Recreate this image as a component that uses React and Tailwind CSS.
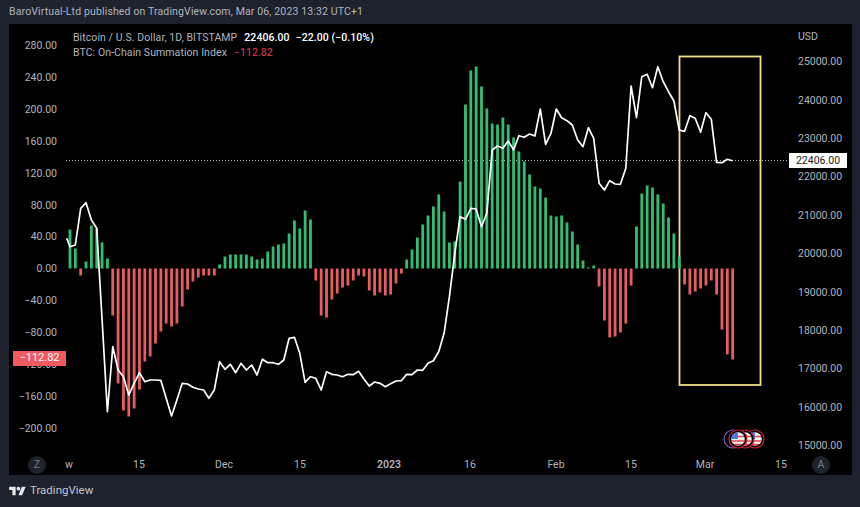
import React from 'react';

const BAR_STEP = 5.344;
const BASELINE = 268.5;

const dayX = (n) => 70 + n * BAR_STEP;

// Summation index per day, px above (+) or below (-) the zero line
const BARS = [
  39, 20, -7, 7, 43, 40, 26, 10, -47, -115, -142, -148, -140, -121, -93, -88, -75, -63, -55, -58, -55, -38, -21, -13,
  -9, -7, -7, -7, 4, 12, 14, 14, 14, 14, 12, 9, 10, 17, 22, 24, 25, 35, 48, 40, 58, 49, -12, -47, -49, -31, -25, -19,
  -17, -12, -7, -8, -22, -27, -24, -27, -26, -15, -5, 9, 19, 31, 44, 53, 62, 74, 57, 26, 27, 87, 164, 198, 202, 182,
  160, 145, 144, 151, 144, 131, 117, 107, 94, 82, 80, 71, 53, 52, 53, 46, 37, 24, 8, 1, 3, -18, -52, -69, -68, -64,
  -55, -17, 42, 75, 83, 81, 74, 65, 51, 35, 12, -16, -26, -23, -20, -17, -12, -26, -61, -86, -91,
];

// BTC close per day, page y
const PRICE = [
  246.7, 245, 208.3, 202.7, 220, 228.3, 320, 411.7, 346.7, 370, 376.7, 395, 383.3, 372.7, 381.7, 380, 380, 380.3,
  398.3, 416, 400, 383.3, 384, 387.3, 389, 390, 398.3, 390, 361.7, 369.3, 364.3, 372.7, 363.3, 370, 365, 375, 359.3,
  362.7, 362.7, 364.3, 360, 338.3, 337.3, 353.3, 382.3, 376.7, 378.3, 390, 371.7, 374.3, 375, 376.7, 374.3, 374.7,
  371.3, 379, 386, 382, 383.3, 386.7, 383.7, 381, 380.7, 374.3, 374.7, 370, 370.3, 363.3, 360.7, 351.7, 333.3, 296.7,
  253.3, 216.7, 219.3, 208.3, 209, 226.7, 213.3, 150, 146, 148.3, 141, 150, 135.7, 137.3, 134, 136, 109, 144.3, 133.3,
  109, 117.7, 120.7, 125, 140, 146.7, 127.7, 138.3, 183.3, 190, 180.7, 184, 184.3, 168.3, 86, 117.7, 76.7, 74.3, 87.7,
  66.7, 81.7, 91.7, 101, 130, 131.3, 115.7, 118.3, 132.3, 112.7, 119.3, 162.3, 162.7, 159.3, 160.7,
];

const LEFT_AXIS = [
  '280.00', '240.00', '200.00', '160.00', '120.00', '80.00', '40.00', '0.00',
  '−40.00', '−80.00', '−120.00', '−160.00', '−200.00',
];
const RIGHT_AXIS = [
  '25000.00', '24000.00', '23000.00', '22000.00', '21000.00', '20000.00',
  '19000.00', '18000.00', '17000.00', '16000.00', '15000.00',
];

const linePoints = ['66.7,238.3', ...PRICE.map((y, i) => `${dayX(i).toFixed(1)},${y}`)].join(' ');

const UsFlag = ({ cx, ring }) => (
  <g>
    <circle cx={cx} cy={439} r={9} fill="#000" stroke={ring} strokeWidth="1.2" />
    <circle cx={cx} cy={439} r={6.8} fill="#f4f4f4" />
    <path d={`M${cx - 6} 436.5h12M${cx - 6.4} 441h12.8M${cx - 4} 444.5h8`} stroke="#e0434b" strokeWidth="1.6" />
    <path d={`M${cx} 432.2a6.8 6.8 0 0 0-6.8 6.8h6.8z`} fill="#4f78d8" />
  </g>
);

const Chart = () => (
  <svg className="block w-[730px] h-[431px] shrink-0" viewBox="60 24 730 431">
    <line x1="66" y1="160.5" x2="790" y2="160.5" stroke="#b2b5be" strokeWidth="1" strokeDasharray="1 2" />
    <rect x="679.5" y="56.5" width="81" height="328.5" fill="none" stroke="#efe08a" strokeWidth="1.8" />
    {BARS.map((h, i) => (
      <rect
        key={i}
        x={dayX(i) - 1.4}
        y={h > 0 ? BASELINE - h : BASELINE}
        width="2.8"
        height={Math.abs(h)}
        fill={h > 0 ? '#2fbf71' : '#e85d62'}
      />
    ))}
    <polyline points={linePoints} fill="none" stroke="#fff" strokeWidth="1.7" strokeLinejoin="round" />
    <UsFlag cx={755} ring="#c2263a" />
    <UsFlag cx={745} ring="#c2263a" />
    <circle cx={733} cy={439} r={9} fill="none" stroke="#7a5cc8" strokeWidth="1.2" />
    <UsFlag cx={738} ring="#d0233a" />
  </svg>
);

const App = () => {
  return (
    <div className="w-[860px] h-[507px] bg-[#1e222d] text-[#b2b5be] font-['Roboto',sans-serif] text-[10.5px] overflow-hidden">
      {/* Published by */}
      <div className="h-[24px] pl-[9px] flex items-center text-[10.5px] tracking-[0.14px]">
        BaroVirtual-Ltd published on TradingView.com, Mar 06, 2023 13:32 UTC+1
      </div>

      {/* Chart panel */}
      <div className="relative ml-[9px] w-[843px] h-[451px] bg-black">
        <div className="flex h-[431px]">
          <div className="w-[51px] shrink-0 pt-[6px] pr-[3px] flex flex-col items-end">
            {LEFT_AXIS.map((v) => (
              <div key={v} className="h-[31.9px] shrink-0 flex items-center">{v}</div>
            ))}
          </div>
          <Chart />
          <div className="w-[62px] shrink-0 pl-[8px] flex flex-col">
            <div className="h-[13px] shrink-0 mt-[6px] flex items-center">USD</div>
            {RIGHT_AXIS.map((v) => (
              <div key={v} className="h-[38.4px] shrink-0 flex items-center">{v}</div>
            ))}
          </div>
        </div>

        {/* Time axis */}
        <div className="h-[20px] flex items-center">
          <div className="ml-[19px] w-[18px] h-[18px] rounded-full bg-[#1e222d] flex items-center justify-center text-[#787b86]">Z</div>
          <div className="ml-[4px] w-[38px] text-center">w</div>
          <div className="w-[102px] text-center">15</div>
          <div className="w-[68px] text-center">Dec</div>
          <div className="w-[84px] text-center">15</div>
          <div className="w-[94px] text-center font-semibold">2023</div>
          <div className="w-[68px] text-center">16</div>
          <div className="w-[104px] text-center">Feb</div>
          <div className="w-[46px] text-center">15</div>
          <div className="w-[102px] text-center">Mar</div>
          <div className="w-[50px] text-center">15</div>
          <div className="ml-[6px] w-[18px] h-[18px] rounded-full bg-[#1e222d] flex items-center justify-center text-[#787b86]">A</div>
        </div>

        {/* Legend */}
        <div className="absolute left-[64px] top-[6px] leading-[15px] tracking-[0.08px]">
          <div className="flex">
            <span>Bitcoin / U.S. Dollar, 1D, BITSTAMP</span>
            <span className="ml-[7px] text-white font-medium">22406.00</span>
            <span className="ml-[6px] text-white font-medium">−22.00 (−0.10%)</span>
          </div>
          <div className="flex">
            <span>BTC: On-Chain Summation Index</span>
            <span className="ml-[7px] text-[#e0444c]">−112.82</span>
          </div>
        </div>

        {/* Last value tags */}
        <div className="absolute left-[4px] top-[327px] w-[53px] h-[15px] bg-[#f05a5f] text-white flex items-center justify-center text-[11px]">−112.82</div>
        <div className="absolute left-[780px] top-[129px] w-[58px] h-[15px] bg-white text-[#222] flex items-center justify-center">22406.00</div>
      </div>

      {/* Footer logo */}
      <div className="h-[32px] pl-[9px] flex items-center gap-[4px] text-[11.5px] text-[#c3c6ce]">
        <svg width="17" height="13" viewBox="0 0 36 28" fill="#e6e7ea">
          <path d="M14 22H7V11H0V4h14v18zM28 22h-8l7.5-18h8L28 22z" />
          <circle cx="20" cy="8" r="4" />
        </svg>
        <span>TradingView</span>
      </div>
    </div>
  );
};

export default App;
